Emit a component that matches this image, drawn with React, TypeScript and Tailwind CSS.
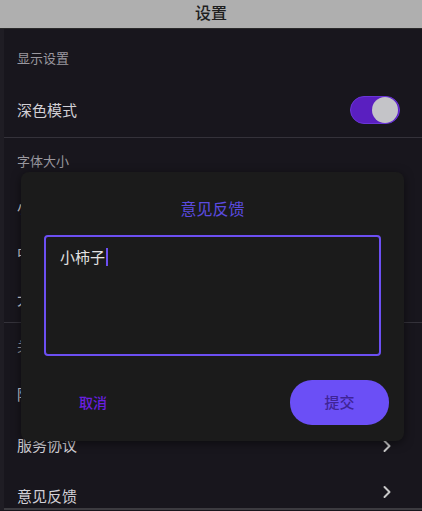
import React from "react";

const font = { fontFamily: '"Noto Sans CJK SC", "Noto Sans", sans-serif' };

function Chevron() {
  return (
    <svg width="10" height="14" viewBox="0 0 10 14" fill="none">
      <path d="M2.5 2 L7.5 7 L2.5 12" stroke="#c8c8c8" strokeWidth="2" strokeLinecap="round" strokeLinejoin="round" />
    </svg>
  );
}

function Header({ label, h }: { label: string; h: string }) {
  return (
    <div className={`flex items-center pl-[13px] text-[13px] text-[#9a989f] ${h}`}>{label}</div>
  );
}

function Row({ label, h, arrow, extra }: { label: string; h: string; arrow?: boolean; extra?: string }) {
  return (
    <div className={`flex justify-between pl-[13px] pr-[30px] text-[15px] text-[#d2d0d6] ${h} ${extra ?? "items-center"}`}>
      <span>{label}</span>
      {arrow && <Chevron />}
    </div>
  );
}

export default function App() {
  return (
    <div style={font} className="relative h-[511px] w-[422px] overflow-hidden bg-[#18161d]">
      <div className="flex h-[29px] items-center justify-center border-b border-[#2a2a2a] bg-[#afafaf] pb-[5px] text-[16px] font-medium text-[#1e1e1e]">
        设置
      </div>
      <div className="border-l-4 border-[#1f1d24]">
        <Header label="显示设置" h="h-[54px] pt-1" />
        <div className="flex h-[54px] items-center justify-between pl-[13px] pr-[22px] text-[15px] text-[#d2d0d6]">
          <span>深色模式</span>
          <div className="flex h-[28px] w-[50px] items-center justify-end rounded-full border border-[#6a35d8] bg-[#5a1fc0] pr-[1px]">
            <div className="h-[26px] w-[26px] rounded-full bg-[#c4c4c8]" />
          </div>
        </div>
        <div className="h-px bg-[#34323a]" />
        <Header label="字体大小" h="h-[46px]" />
        <Row label="小" h="h-[46px]" />
        <Row label="中" h="h-[46px]" />
        <Row label="大" h="h-[46px]" />
        <div className="h-px bg-[#34323a]" />
        <Header label="关于我们" h="h-[46px]" />
        <Row label="隐私政策" h="h-[51px]" arrow />
        <Row label="服务协议" h="h-[51px]" arrow />
        <Row label="意见反馈" h="h-[37px]" arrow extra="items-start pt-[14px]" />
        <div className="h-[2px] bg-[#3c3b40]" />
      </div>

      <div className="absolute left-[21px] top-[172px] flex h-[269px] w-[383px] flex-col rounded-[8px] bg-[#1b1b1b] shadow-[0_2px_10px_rgba(0,0,0,0.5)]">
        <div className="pt-[24px] text-center text-[16px] text-[#5b4be0]">意见反馈</div>
        <div className="mx-[23px] mt-[15px] h-[121px] rounded-[4px] border-2 border-[#6c4ff2] bg-[#1b1b1b] px-[14px] pt-[9px]">
          <div className="flex items-center text-[15px] text-[#e2e2e2]">
            小柿子
            <span className="ml-[1px] inline-block h-[18px] w-[2px] bg-[#6c4ff2]" />
          </div>
        </div>
        <div className="mt-[24px] flex items-center justify-between pl-[58px] pr-[15px]">
          <span className="text-[14px] font-medium text-[#6a1fe0]">取消</span>
          <button className="flex h-[45px] w-[99px] items-center justify-center rounded-[22px] bg-[#6b4ff6] text-[15px] font-medium text-[#3f2496]">
            提交
          </button>
        </div>
      </div>
    </div>
  );
}
